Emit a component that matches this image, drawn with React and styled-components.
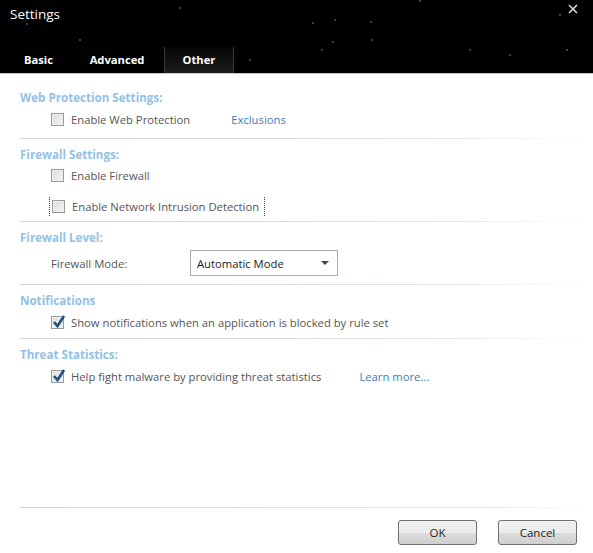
import styled, { createGlobalStyle } from "styled-components";

const GlobalStyle = createGlobalStyle`
  html, body {
    margin: 0;
    padding: 0;
    background: #ffffff;
  }
  body {
    font-family: "Open Sans", "Noto Sans", sans-serif;
  }
`;

const Window = styled.div`
  width: 593px;
  height: 553px;
  display: flex;
  flex-direction: column;
  background: #ffffff;
  overflow: hidden;
`;

const Header = styled.div`
  position: relative;
  height: 74px;
  background: #000000;
  border-bottom: 1px solid #c8c8c8;
  display: flex;
  flex-direction: column;
  justify-content: space-between;
  box-sizing: border-box;
`;

const Stars = styled.svg`
  position: absolute;
  left: 0;
  top: 0;
  pointer-events: none;
`;

const Title = styled.div`
  color: #ffffff;
  font-size: 13.5px;
  padding: 5px 0 0 10px;
`;

const Close = styled.svg`
  position: absolute;
  right: 14px;
  top: 3px;
`;

const Tabs = styled.div`
  display: flex;
  padding-left: 7px;
  height: 26px;
`;

const Tab = styled.div`
  box-sizing: border-box;
  width: ${(p) => p.$w}px;
  display: flex;
  align-items: center;
  justify-content: center;
  color: #ffffff;
  font-size: 11.2px;
  font-weight: 700;
  padding-bottom: 2px;
  border-left: 1px solid ${(p) => (p.$active ? "#3a3a3a" : "transparent")};
  border-right: 1px solid ${(p) => (p.$active ? "#3a3a3a" : "transparent")};
  background: ${(p) =>
    p.$active ? "linear-gradient(#050505, #1c1c1a)" : "transparent"};
`;

const Body = styled.div`
  flex: 1;
  padding: 14px 0 0 20px;
  display: flex;
  flex-direction: column;
`;

const Section = styled.div`
  display: flex;
  flex-direction: column;
  padding-bottom: ${(p) => p.$pb || 8}px;
  border-bottom: ${(p) => (p.$last ? "none" : "1px solid transparent")};
  border-image: ${(p) =>
    p.$last
      ? "none"
      : "linear-gradient(90deg, #cfd6dc 0%, #dfe3e6 70%, rgba(255,255,255,0) 100%) 1"};
  margin-bottom: 6px;
`;

const Heading = styled.div`
  color: #92c1e6;
  font-size: 11.6px;
  font-weight: 700;
  height: 18px;
  line-height: 20px;
`;

const Row = styled.label`
  display: flex;
  align-items: center;
  height: ${(p) => p.$h || 22}px;
  padding-left: 31px;
  color: #555555;
  font-size: 11.25px;
  margin-top: ${(p) => p.$mt || 0}px;
`;

const Box = styled.span`
  box-sizing: border-box;
  width: 13px;
  height: 13px;
  border: 1px solid #9a9a9a;
  background: linear-gradient(135deg, #dcdcdc, #f4f4f4);
  box-shadow: inset 0 0 0 1px #f0f0f0;
  margin-right: 7px;
  position: relative;
  flex-shrink: 0;
`;

const Tick = styled.svg`
  position: absolute;
  left: 0px;
  top: -3px;
`;

const Focus = styled.span`
  display: flex;
  align-items: center;
  margin-left: -2px;
  padding: 2px 5px 2px 2px;
  border-left: 1px dotted #444;
  border-right: 1px dotted #444;
`;

const Link = styled.span`
  color: #3b7dbb;
  margin-left: ${(p) => p.$ml}px;
`;

const SelectRow = styled.div`
  display: flex;
  align-items: center;
  padding-left: 31px;
  height: 26px;
  margin-top: 4px;
  color: #555555;
  font-size: 11.25px;
`;

const SelectLabel = styled.span`
  width: 139px;
`;

const Select = styled.div`
  box-sizing: border-box;
  width: 148px;
  height: 26px;
  border: 1px solid #abadb3;
  display: flex;
  align-items: center;
  justify-content: space-between;
  padding: 0 8px 0 6px;
  color: #1e1e1e;
  font-size: 11.25px;
  background: #ffffff;
`;

const Caret = styled.span`
  width: 0;
  height: 0;
  border-left: 4px solid transparent;
  border-right: 4px solid transparent;
  border-top: 4px solid #444;
`;

const Footer = styled.div`
  box-sizing: border-box;
  height: 46px;
  border-top: 1px solid transparent;
  border-image: linear-gradient(90deg, #d4d8dc 0%, #e3e6e8 80%, rgba(255,255,255,0) 100%) 1;
  margin-left: 20px;
  display: flex;
  justify-content: flex-end;
  align-items: flex-start;
  gap: 21px;
  padding: 12px 16px 0 0;
`;

const Button = styled.button`
  box-sizing: border-box;
  width: 79px;
  height: 25px;
  border: 1px solid #707070;
  border-radius: 3px;
  background: linear-gradient(#f2f2f2 0%, #ebebeb 50%, #dddddd 51%, #cfcfcf 100%);
  color: #1e1e1e;
  font-family: "Open Sans", "Noto Sans", sans-serif;
  font-size: 11.5px;
  padding: 0;
`;

const Check = ({ checked }) => (
  <Box>
    {checked && (
      <Tick width="14" height="15" viewBox="0 0 14 15">
        <path d="M2 8 L5.5 12 L12 2" fill="none" stroke="#1f4f80" strokeWidth="2.6" />
      </Tick>
    )}
  </Box>
);

const stars = [
  [27, 24], [313, 23], [335, 20], [333, 42], [322, 50], [371, 22], [420, 1], [372, 40], [560, 15], [510, 55], [80, 40], [250, 60], [567, 50], [470, 50], [180, 8]
];

const App = () => {
  return (
    <>
      <GlobalStyle />
      <Window>
        <Header>
          <Stars width="593" height="74">
            {stars.map(([x, y], i) => (
              <circle key={i} cx={x} cy={y} r="0.8" fill="#8a8fb8" />
            ))}
          </Stars>
          <Title>Settings</Title>
          <Close width="12" height="12" viewBox="0 0 12 12">
            <path d="M2 2 L10 10 M10 2 L2 10" stroke="#d8d8d8" strokeWidth="1.6" />
          </Close>
          <Tabs>
            <Tab $w={63}>Basic</Tab>
            <Tab $w={94}>Advanced</Tab>
            <Tab $w={70} $active>Other</Tab>
          </Tabs>
        </Header>
        <Body>
          <Section $pb={6}>
            <Heading>Web Protection Settings:</Heading>
            <Row $h={26}>
              <Check />
              Enable Web Protection
              <Link $ml={41}>Exclusions</Link>
            </Row>
          </Section>
          <Section $pb={4}>
            <Heading>Firewall Settings:</Heading>
            <Row $h={24}>
              <Check />
              Enable Firewall
            </Row>
            <Row $h={22} $mt={8}>
              <Focus>
                <Check />
                Enable Network Intrusion Detection
              </Focus>
            </Row>
          </Section>
          <Section $pb={8}>
            <Heading>Firewall Level:</Heading>
            <SelectRow>
              <SelectLabel>Firewall Mode:</SelectLabel>
              <Select>
                Automatic Mode
                <Caret />
              </Select>
            </SelectRow>
          </Section>
          <Section $pb={3}>
            <Heading>Notifications</Heading>
            <Row $h={26}>
              <Check checked />
              Show notifications when an application is blocked by rule set
            </Row>
          </Section>
          <Section $last>
            <Heading>Threat Statistics:</Heading>
            <Row $h={26}>
              <Check checked />
              Help fight malware by providing threat statistics
              <Link $ml={38}>Learn more...</Link>
            </Row>
          </Section>
        </Body>
        <Footer>
          <Button>OK</Button>
          <Button>Cancel</Button>
        </Footer>
      </Window>
    </>
  );
};

export default App;
